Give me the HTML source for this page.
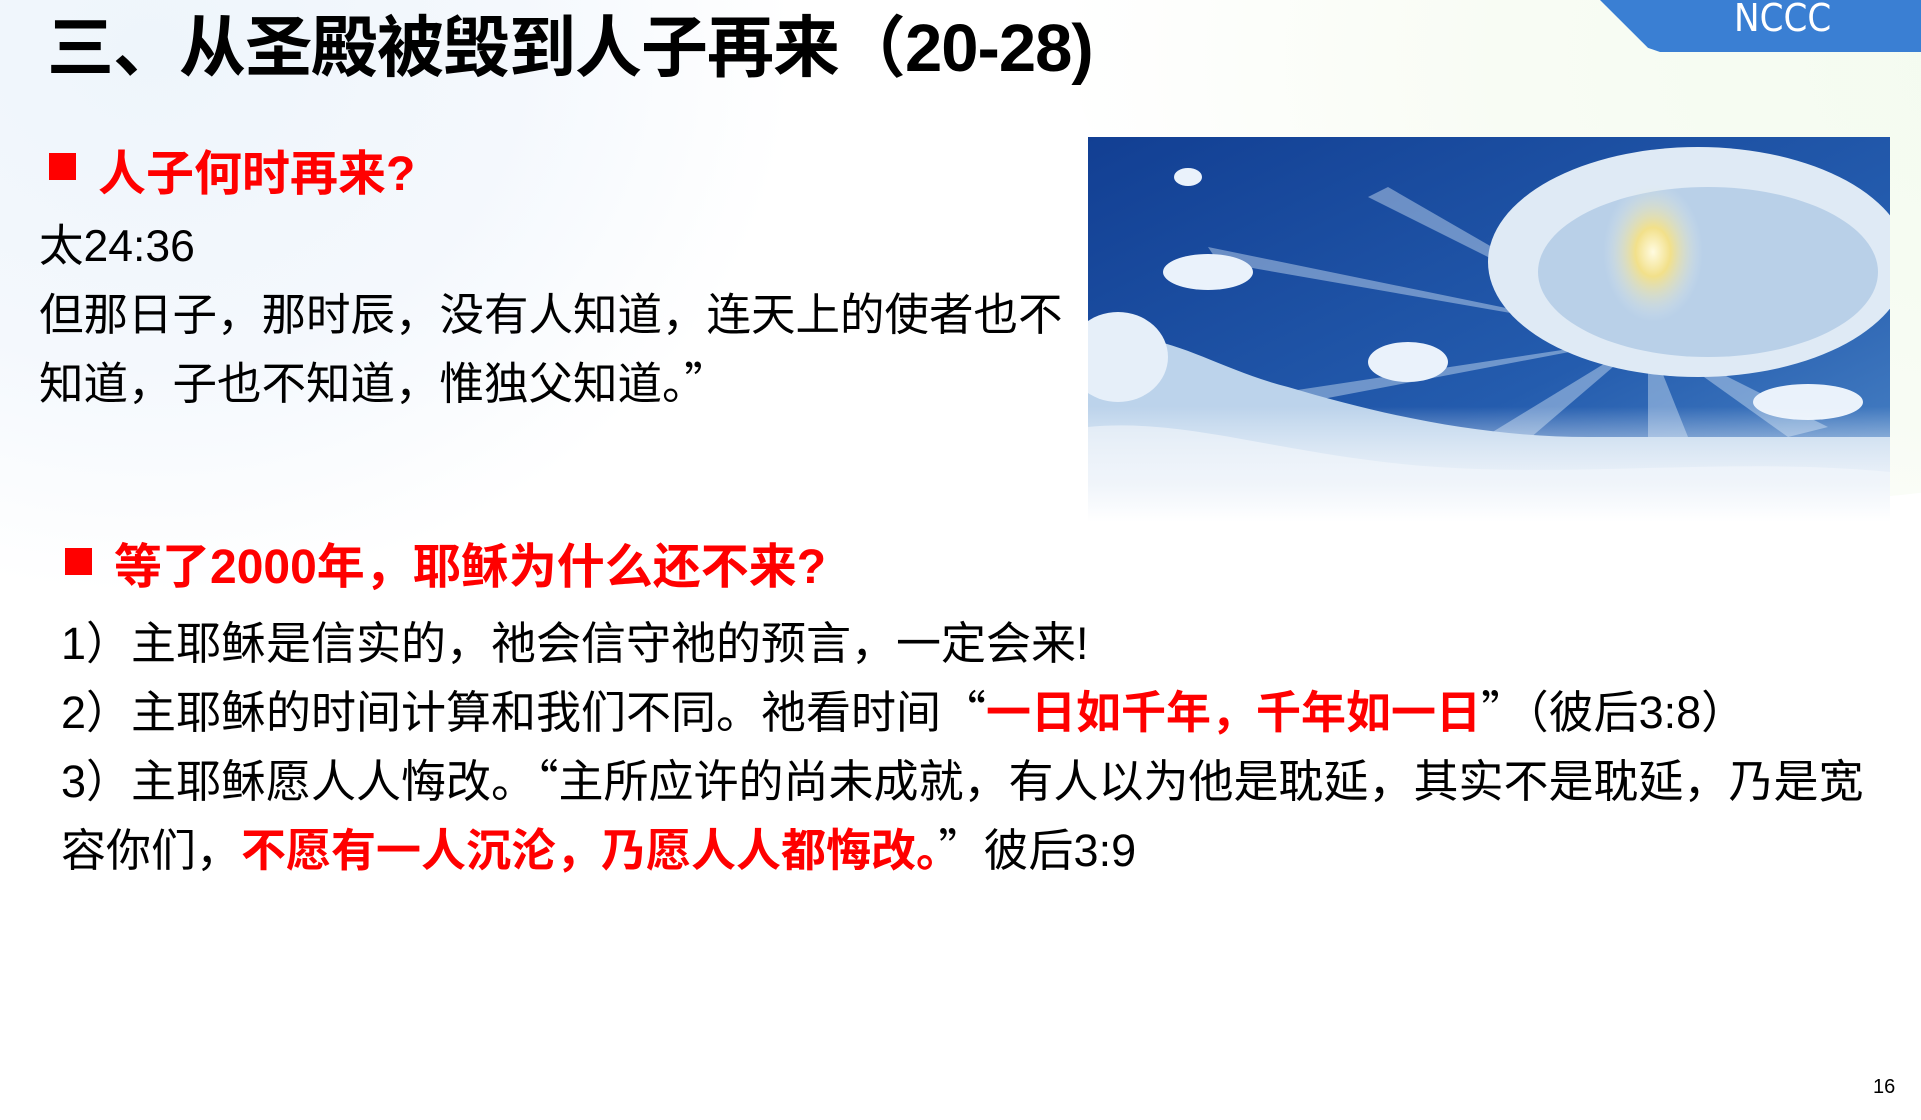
<!DOCTYPE html>
<html><head><meta charset="utf-8"><style>
*{margin:0;padding:0;box-sizing:border-box}
body{width:1921px;height:1120px;overflow:hidden;background:#fff;position:relative;font-family:"Liberation Sans","Noto Sans CJK SC",sans-serif;color:#000}
.bg1{position:absolute;left:-500px;top:-500px;width:1300px;height:1100px;background:radial-gradient(ellipse at center,#eef5fb 0%,#f4f8fd 40%,rgba(255,255,255,0) 70%)}
.bg2{position:absolute;left:1050px;top:-600px;width:1500px;height:1100px;border-radius:50%;background:radial-gradient(ellipse at 70% 60%,#f3fbef 0%,#f8fcf4 40%,rgba(255,255,255,0) 70%)}
.tab{position:absolute;left:1600px;top:0;width:330px;height:52px;background:#3a7fd3;clip-path:polygon(0 0,100% 0,100% 100%,60px 100%,48px 92%)}
.tab span{position:absolute;left:134px;top:-4px;color:#fff;font-size:38px;font-family:"DejaVu Sans Condensed","Liberation Sans",sans-serif}
.t{position:absolute;white-space:nowrap}
.title{left:47px;top:-6px;font-size:67px;font-weight:bold;letter-spacing:-1px}
.sq{position:absolute;background:#f00}
.red{color:#f00;font-weight:bold}
.h{font-size:48px;color:#f00;font-weight:bold}
.b{font-size:44.5px}
.l{font-size:45px}
.b div,.l div{height:69px;line-height:69px;overflow:visible}
.q{font-family:"Noto Sans CJK SC",sans-serif;line-height:1}
</style></head><body>
<div class="bg1"></div><div class="bg2"></div>
<div class="tab"><span>NCCC</span></div>
<div class="t title">三、从圣殿被毁到人子再来（20-28)</div>

<div class="sq" style="left:49px;top:153px;width:27px;height:27px"></div>
<div class="t h" style="left:98px;top:134px">人子何时再来?</div>
<div class="t b" style="left:39px;top:212px"><div>太24:36</div><div>但那日子，那时辰，没有人知道，连天上的使者也不</div><div>知道，子也不知道，惟独父知道。<span class="q">”</span></div></div>

<svg style="position:absolute;left:1088px;top:137px" width="802" height="385" viewBox="0 0 802 385">
<defs>
<linearGradient id="sky" x1="0" y1="0" x2="1" y2="1"><stop offset="0" stop-color="#123f93"/><stop offset="0.6" stop-color="#245cae"/><stop offset="1" stop-color="#4f88c8"/></linearGradient>
<radialGradient id="glow" cx="0.5" cy="0.5" r="0.5"><stop offset="0" stop-color="#fffbe0"/><stop offset="0.35" stop-color="#f2e08a"/><stop offset="1" stop-color="#dbe9f6" stop-opacity="0"/></radialGradient>
<linearGradient id="fade" x1="0" y1="0" x2="0" y2="1"><stop offset="0.7" stop-color="#fff" stop-opacity="0"/><stop offset="0.9" stop-color="#f2f6fb" stop-opacity="0.9"/><stop offset="1" stop-color="#fff"/></linearGradient>
</defs>
<rect width="802" height="385" fill="url(#sky)"/>
<g fill="#cfe2f5" opacity="0.45">
<polygon points="560,200 120,110 130,125"/><polygon points="560,200 130,265 140,280"/><polygon points="560,200 380,310 420,320"/><polygon points="560,200 560,300 600,300"/><polygon points="560,200 700,300 740,290"/><polygon points="560,200 280,60 300,50"/></g>
<ellipse cx="610" cy="125" rx="210" ry="115" fill="#dfeaf5"/>
<ellipse cx="620" cy="135" rx="170" ry="85" fill="#b9d0e8"/>
<ellipse cx="565" cy="115" rx="50" ry="70" fill="url(#glow)"/>
<path d="M0,210 C60,180 120,230 200,250 C300,280 400,300 500,300 L802,300 L802,385 L0,385Z" fill="#bcd3eb"/>
<path d="M0,290 C100,280 200,320 350,330 C500,340 650,320 802,335 L802,385 L0,385Z" fill="#dbe7f4"/>
<ellipse cx="120" cy="135" rx="45" ry="18" fill="#eaf2fb"/>
<ellipse cx="320" cy="225" rx="40" ry="20" fill="#eaf2fb"/>
<ellipse cx="720" cy="265" rx="55" ry="18" fill="#eaf2fb"/>
<ellipse cx="30" cy="220" rx="50" ry="45" fill="#e6eff9"/>
<ellipse cx="100" cy="40" rx="14" ry="9" fill="#eaf2fb"/>
<rect width="802" height="385" fill="url(#fade)"/>
</svg>

<div class="sq" style="left:65px;top:548px;width:27px;height:27px"></div>
<div class="t h" style="left:114px;top:527px">等了2000年，耶稣为什么还不来?</div>
<div class="t l" style="left:61px;top:609px"><div>1）主耶稣是信实的，祂会信守祂的预言，一定会来!</div><div>2）主耶稣的时间计算和我们不同。祂看时间<span class="q">“</span><span class="red">一日如千年，千年如一日</span><span class="q">”</span>（彼后3:8）</div><div>3）主耶稣愿人人悔改。<span class="q">“</span>主所应许的尚未成就，有人以为他是耽延，其实不是耽延，乃是宽</div><div>容你们，<span class="red">不愿有一人沉沦，乃愿人人都悔改。</span><span class="q">”</span>彼后3:9</div></div>

<div class="t" style="left:1873px;top:1076px;font-size:20px">16</div>
</body></html>
